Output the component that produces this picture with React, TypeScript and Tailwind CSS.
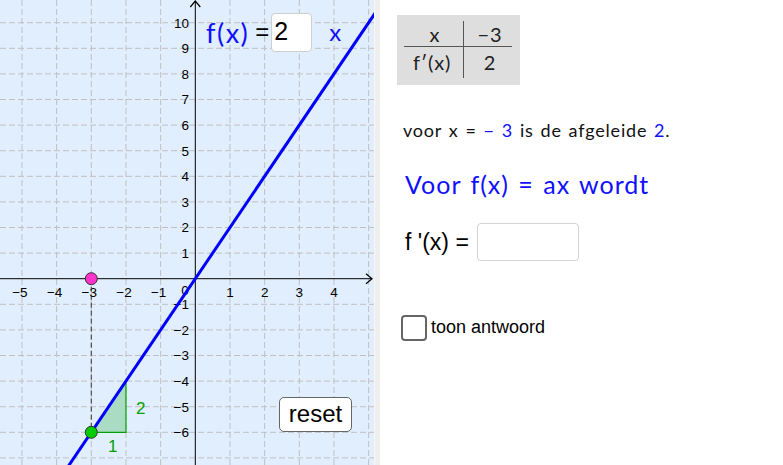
import React from 'react';

const OX = 195.3;
const OY = 278.7;
const UX = 34.67;
const UY = 25.6;

const px = (x: number) => OX + x * UX;
const py = (y: number) => OY - y * UY;

const MINUS = '\u2212';

function Graph() {
  const vLines = [-5, -4, -3, -2, -1, 1, 2, 3, 4, 5];
  const hLines = [10, 9, 8, 7, 6, 5, 4, 3, 2, 1, -1, -2, -3, -4, -5, -6, -7];
  const xLabels = [-5, -4, -3, -2, -1, 1, 2, 3, 4];
  const yLabels = [10, 9, 8, 7, 6, 5, 4, 3, 2, 1, -1, -2, -3, -4, -5, -6];
  const fmt = (n: number) => (n < 0 ? MINUS + Math.abs(n) : String(n));

  return (
    <svg width="374" height="465" className="block" style={{ fontFamily: '"Liberation Sans", Arial, sans-serif' }}>
      <rect x="0" y="0" width="374" height="465" fill="#e1eefd" />
      {vLines.map((k) => (
        <line key={'v' + k} x1={px(k)} y1="0" x2={px(k)} y2="465" stroke="#c0c0c0" strokeWidth="1" strokeDasharray="6 3" />
      ))}
      {hLines.map((k) => (
        <line key={'h' + k} x1="0" y1={py(k)} x2="374" y2={py(k)} stroke="#c0c0c0" strokeWidth="1" strokeDasharray="6 3" />
      ))}

      {/* axes */}
      <line x1="0" y1={OY} x2="372" y2={OY} stroke="#000" strokeWidth="1" />
      <path d={`M366 ${OY - 5} L372 ${OY} L366 ${OY + 5}`} fill="none" stroke="#000" strokeWidth="1.2" />
      <line x1={OX} y1="1" x2={OX} y2="465" stroke="#000" strokeWidth="1" />
      <path d={`M${OX - 5} 7 L${OX} 1 L${OX + 5} 7`} fill="none" stroke="#000" strokeWidth="1.2" />

      {xLabels.map((k) => (
        <text key={'xl' + k} x={px(k) - (k < 0 ? 2 : 0)} y="297" fontSize="13.5" textAnchor="middle" fill="#000">
          {fmt(k)}
        </text>
      ))}
      <text x="185" y="295" fontSize="13.5" textAnchor="middle" fill="#000">0</text>
      {yLabels.map((k) => (
        <text key={'yl' + k} x="189" y={py(k) + 4.8} fontSize="13.5" textAnchor="end" fill="#000">
          {fmt(k)}
        </text>
      ))}

      {/* vertical helper line */}
      <line x1={px(-3)} y1={py(0)} x2={px(-3)} y2={py(-6)} stroke="#333" strokeWidth="1" strokeDasharray="5 3" />

      {/* slope triangle */}
      <polygon
        points={`${px(-3)},${py(-6)} ${px(-2)},${py(-6)} ${px(-2)},${py(-4)}`}
        fill="#a9dcc2"
        stroke="#00a000"
        strokeWidth="1.2"
      />
      <text x="136" y="414" fontSize="17" fill="#00a000">2</text>
      <text x="108" y="452" fontSize="17" fill="#00a000">1</text>

      {/* f(x) = 2x */}
      <line x1={px(-4)} y1={py(-8)} x2={px(5.6)} y2={py(11.2)} stroke="#0000ff" strokeWidth="3" />

      <circle cx={px(-3)} cy={py(0)} r="6" fill="#ff33cc" stroke="#333" strokeWidth="1" />
      <circle cx={px(-3)} cy={py(-6)} r="6" fill="#00cc00" stroke="#333" strokeWidth="1" />
    </svg>
  );
}

export default function App() {
  return (
    <div className="flex w-[783px] h-[465px] overflow-hidden bg-white">
      <div className="relative w-[374px] h-[465px] shrink-0">
        <Graph />
        <div className="absolute left-[206px] top-[12px] flex items-center h-[40px]">
          <span className="text-[27px] tracking-[1.5px] text-[#1010ff] leading-none" style={{ fontFamily: 'Lato, sans-serif' }}>f(x)</span>
          <span className="ml-[6px] text-[24px] text-black leading-none" style={{ fontFamily: '"Liberation Sans", Arial, sans-serif' }}>=</span>
          <div className="ml-[2px] w-[41px] h-[39px] bg-white border border-[#cfcfcf] rounded-[4px] flex items-center pl-[2px] text-[25px] text-black" style={{ fontFamily: '"Liberation Sans", Arial, sans-serif' }}>
            2
          </div>
          <span className="ml-[17px] text-[24px] text-[#1010ff] leading-none" style={{ fontFamily: 'Lato, sans-serif' }}>x</span>
        </div>
        <button
          className="absolute left-[279px] top-[397px] w-[73px] h-[35px] bg-white border border-[#666] rounded-[5px] text-[24px] text-black leading-none flex items-center justify-center pb-[2px]"
          style={{ fontFamily: '"Liberation Sans", Arial, sans-serif' }}
        >
          reset
        </button>
      </div>
      <div className="w-[6px] h-full bg-[#efefef] border-l border-[#f7f7f7]" />
      <div className="flex-1 flex flex-col pl-[17px] pt-[15px]" style={{ fontFamily: 'Lato, sans-serif' }}>
        <div className="relative w-[123px] h-[70px] bg-[#dedede] text-[20px] tracking-[0.8px] text-[#222]">
          <div className="absolute left-[7px] top-[31px] w-[108px] h-px bg-[#555]" />
          <div className="absolute left-[66px] top-[6px] w-px h-[57px] bg-[#555]" />
          <div className="absolute left-[18px] top-[8px] w-[40px] text-center leading-[22px]">x</div>
          <div className="absolute left-[70px] top-[8px] w-[46px] text-center leading-[22px]">{MINUS}3</div>
          <div className="absolute left-[6px] top-[36px] w-[58px] text-center leading-[22px]">f′(x)</div>
          <div className="absolute left-[70px] top-[36px] w-[46px] text-center leading-[22px]">2</div>
        </div>
        <div className="mt-[32px] ml-[6px] text-[18px] tracking-[0.8px] [word-spacing:1.5px] leading-[26px] text-[#111] whitespace-nowrap">
          voor x = <span className="text-[#1010ff]">{MINUS} 3</span> is de afgeleide <span className="text-[#1010ff]">2</span>.
        </div>
        <div className="mt-[25px] ml-[8px] text-[25px] tracking-[1px] [word-spacing:2px] leading-[32px] text-[#1010ff] whitespace-nowrap">
          Voor f(x) = ax wordt
        </div>
        <div className="mt-[23px] ml-[8px] flex items-center" style={{ fontFamily: '"Liberation Sans", Arial, sans-serif' }}>
          <span className="text-[23px] text-black">f '(x) =</span>
          <div className="ml-[8px] w-[102px] h-[38px] bg-white border border-[#d4d4d4] rounded-[4px]" />
        </div>
        <div className="mt-[53px] ml-[4px] flex items-center" style={{ fontFamily: '"Liberation Sans", Arial, sans-serif' }}>
          <div className="w-[26px] h-[26px] border-2 border-[#666] rounded-[4px] bg-white" />
          <span className="ml-[4px] text-[18px] text-black">toon antwoord</span>
        </div>
      </div>
    </div>
  );
}
